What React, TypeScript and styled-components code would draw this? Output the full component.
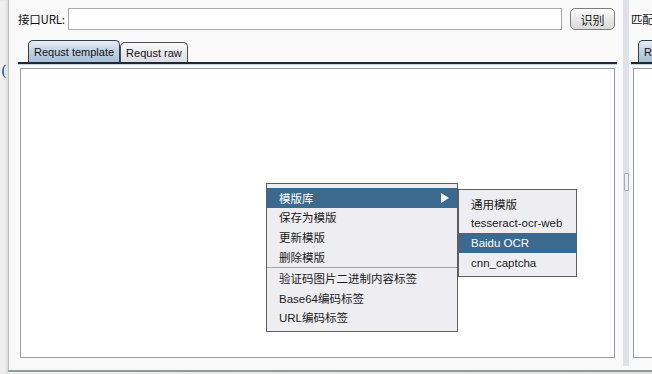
import React from "react";
import styled, { createGlobalStyle } from "styled-components";

const Global = createGlobalStyle`
  html, body { margin: 0; padding: 0; }
  body {
    background: #e9e9e9;
    font-family: "Liberation Sans", "Noto Sans CJK SC", sans-serif;
    font-size: 12px;
    color: #111;
  }
`;

const Screen = styled.div`
  width: 652px;
  height: 374px;
  display: flex;
  overflow: hidden;
  background: linear-gradient(to right, #efefef, #e2e2e2);
`;

const Gutter = styled.div`
  width: 8px;
  flex: none;
  padding-top: 62px;
  box-sizing: border-box;
  color: #2a4d8f;
  font-family: "DejaVu Serif", serif;
  font-size: 15px;
  overflow: hidden;
  box-shadow: inset -2px 0 3px rgba(0, 0, 0, 0.08);
  span { display: block; margin-left: 1px; }
`;

const Window = styled.div`
  flex: 1;
  height: 372px;
  display: flex;
  background: #f9f9f9;
  border-left: 1px solid #b9bdbc;
  border-bottom: 2px solid #8d9e9a;
  box-sizing: border-box;
  overflow: hidden;
`;

const Pane = styled.div<{ $w: number }>`
  width: ${(p) => p.$w}px;
  flex: none;
  display: flex;
  flex-direction: column;
  padding: 8px 0 0 ${(p) => (p.$w > 100 ? 9 : 2)}px;
  box-sizing: border-box;
  overflow: hidden;
`;

const TopRow = styled.div`
  display: flex;
  align-items: center;
  height: 22px;
  padding-right: 2px;
`;

const Label = styled.span`
  width: 50px;
  flex: none;
  font-family: "Noto Sans CJK SC", sans-serif;
  font-size: 11.5px;
  letter-spacing: -0.2px;
  white-space: nowrap;
`;

const UrlInput = styled.div`
  width: 494px;
  height: 22px;
  box-sizing: border-box;
  background: #fff;
  border: 1px solid #a9a9a9;
`;

const Button = styled.div`
  margin-left: 8px;
  width: 45px;
  height: 22px;
  box-sizing: border-box;
  border: 1px solid #7d7d7d;
  border-radius: 5px;
  background: linear-gradient(#fdfdfd, #e6e6e6 60%, #d9d9d9);
  display: flex;
  align-items: center;
  justify-content: center;
  font-family: "Noto Sans CJK SC", sans-serif;
  font-size: 12px;
  color: #222;
`;

const Tabs = styled.div<{ $inset: number }>`
  display: flex;
  align-items: flex-end;
  margin-top: 10px;
  padding-left: ${(p) => p.$inset}px;
  height: 24px;
  width: 599px;
  box-sizing: border-box;
  border-bottom: 2px solid #1c2938;
  box-shadow: 0 1px 0 #c7d3df;
`;

const Tab = styled.div<{ $active?: boolean }>`
  height: ${(p) => (p.$active ? 22 : 20)}px;
  box-sizing: border-box;
  padding: 0 5px;
  display: flex;
  align-items: center;
  border: 1px solid ${(p) => (p.$active ? "#2f3e4f" : "#4c4c52")};
  border-bottom: none;
  border-radius: 5px 5px 0 0;
  background: ${(p) =>
    p.$active
      ? "linear-gradient(#e9eff5, #c3d3e2 45%, #a9c0d6)"
      : "linear-gradient(#fbfbfc, #eaeaee 50%, #dcdce2)"};
  font-size: 11px;
  color: #111;
  white-space: nowrap;
`;

const Content = styled.div<{ $w: number }>`
  position: relative;
  margin: 4px 0 0 2px;
  width: ${(p) => p.$w}px;
  height: 290px;
  box-sizing: border-box;
  background: #fff;
  border: 1px solid #9b9ba8;
`;

const Splitter = styled.div`
  width: 6px;
  flex: none;
  margin-left: 2px;
  height: 366px;
  background: #dfe1e8;
  display: flex;
  justify-content: center;
  padding-top: 173px;
  box-sizing: border-box;
`;

const Knob = styled.div`
  width: 3px;
  height: 16px;
  border: 1px solid #a8abb4;
  border-radius: 1px;
  background: #eceef2;
`;

const Menu = styled.div<{ $x: number; $y: number }>`
  position: absolute;
  left: ${(p) => p.$x}px;
  top: ${(p) => p.$y}px;
  background: #eeeef2;
  border: 1px solid #5e5e62;
  padding: 4px 0;
  box-sizing: border-box;
  font-family: "Liberation Sans", "Noto Sans CJK SC", sans-serif;
  font-size: 11.5px;
  color: #1a1a1a;
`;

const Item = styled.div<{ $hot?: boolean; $w: number }>`
  width: ${(p) => p.$w}px;
  height: 19.6px;
  display: flex;
  align-items: center;
  justify-content: space-between;
  padding: 0 8px 0 12px;
  box-sizing: border-box;
  background: ${(p) => (p.$hot ? "#3b6a8e" : "transparent")};
  color: ${(p) => (p.$hot ? "#fff" : "#1a1a1a")};
  white-space: nowrap;
`;

const Arrow = styled.span`
  width: 0;
  height: 0;
  border-top: 5px solid transparent;
  border-bottom: 5px solid transparent;
  border-left: 8px solid #fff;
`;

const Separator = styled.div`
  height: 1px;
  background: #a2a2a8;
  margin: 1px 0 0;
`;

const mainItems = ["保存为模版", "更新模版", "删除模版"];
const tagItems = ["验证码图片二进制内容标签", "Base64编码标签", "URL编码标签"];
const subItems = ["通用模版", "tesseract-ocr-web", "Baidu OCR", "cnn_captcha"];

export default function App() {
  return (
    <>
      <Global />
      <Screen>
        <Gutter>
          <span>(</span>
        </Gutter>
        <Window>
          <Pane $w={612}>
            <TopRow>
              <Label>接口URL:</Label>
              <UrlInput />
              <Button>识别</Button>
            </TopRow>
            <Tabs $inset={10}>
              <Tab $active>Requst template</Tab>
              <Tab>Requst raw</Tab>
            </Tabs>
            <Content $w={595}>
              <Menu $x={245} $y={114}>
                <Item $hot $w={190}>
                  模版库
                  <Arrow />
                </Item>
                {mainItems.map((t) => (
                  <Item key={t} $w={190}>
                    {t}
                  </Item>
                ))}
                <Separator />
                {tagItems.map((t) => (
                  <Item key={t} $w={190}>
                    {t}
                  </Item>
                ))}
              </Menu>
              <Menu $x={437} $y={120}>
                {subItems.map((t) => (
                  <Item key={t} $hot={t === "Baidu OCR"} $w={117}>
                    {t}
                  </Item>
                ))}
              </Menu>
            </Content>
          </Pane>
          <Splitter>
            <Knob />
          </Splitter>
          <Pane $w={40}>
            <TopRow>
              <Label>匹配规则</Label>
            </TopRow>
            <Tabs $inset={7}>
              <Tab $active>Requst</Tab>
            </Tabs>
            <Content $w={60} />
          </Pane>
        </Window>
      </Screen>
    </>
  );
}
